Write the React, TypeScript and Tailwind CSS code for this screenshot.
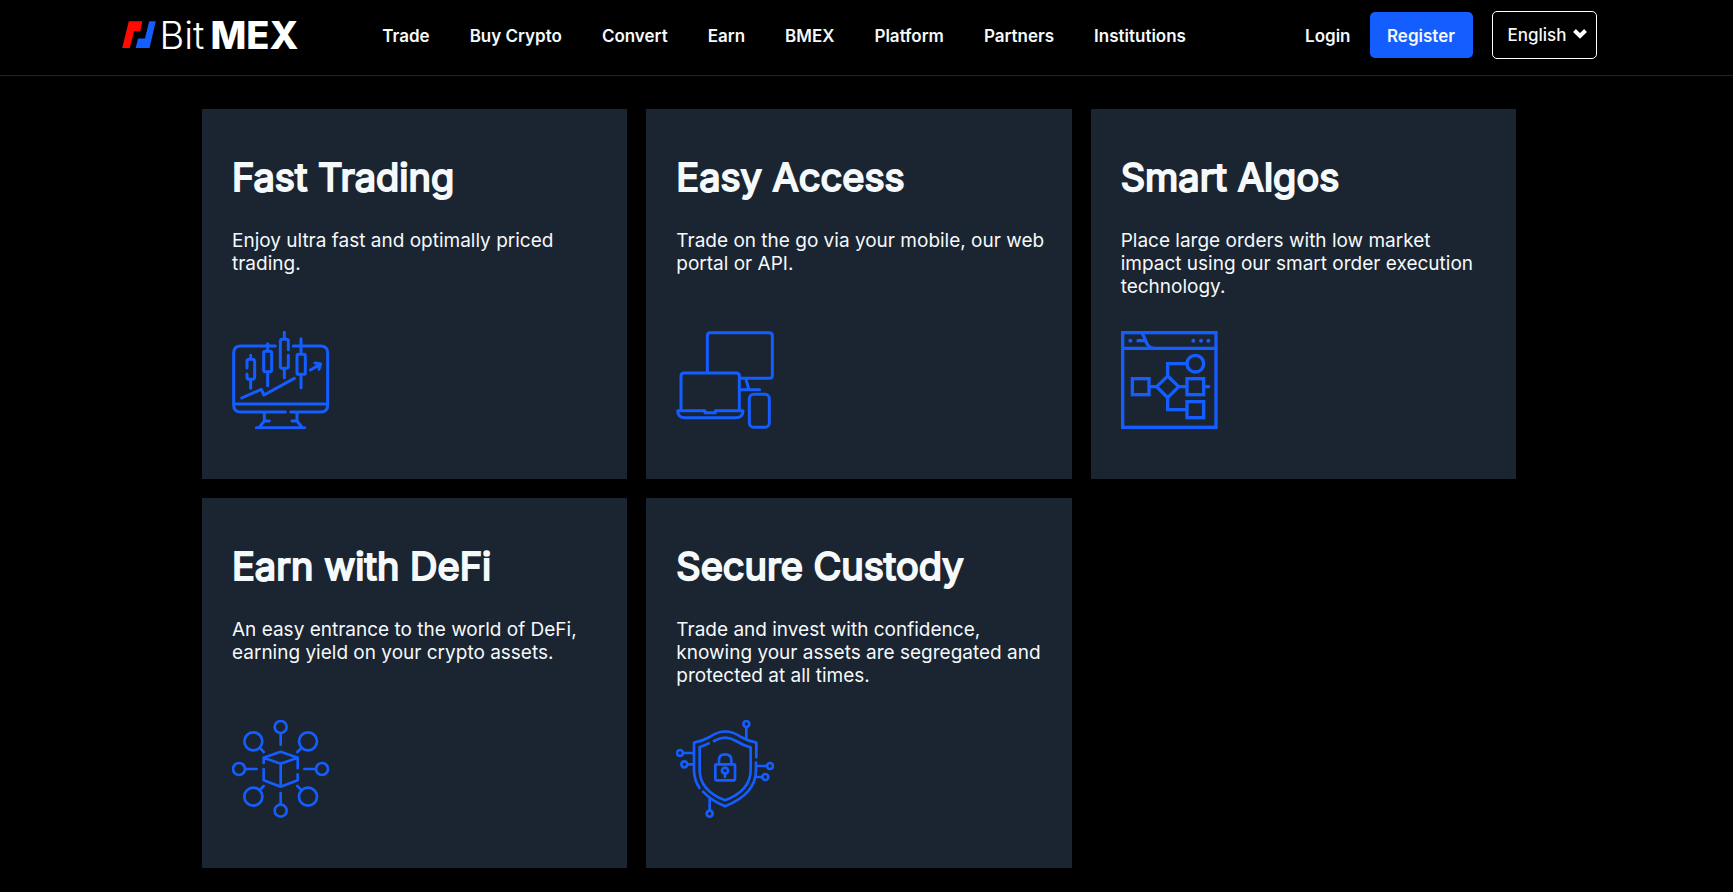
import React from 'react';

const navItems = ['Trade', 'Buy Crypto', 'Convert', 'Earn', 'BMEX', 'Platform', 'Partners', 'Institutions'];

const iconProps = {
  className: 'w-[98px] h-[98px] text-[#145dff]',
  fill: 'none',
  stroke: 'currentColor',
  strokeWidth: 9,
  strokeLinecap: 'round' as const,
  strokeLinejoin: 'round' as const,
  'aria-hidden': true
};

function TradingIcon() {
  return (
    <svg viewBox="36 33 294 294" {...iconProps}>
      {/* Monitor */}
      <path d="M166 78H62Q41 78 41 99V255Q41 276 62 276H196" />
      <path d="M220 78H302Q323 78 323 99V255Q323 276 302 276H212" />
      <path d="M41 252H323" strokeLinecap="butt" />
      <path d="M133 278V303H148M133 303L118 322M231 278V303H216M231 303L246 322M109 323H254" />
      {/* Candles */}
      <path d="M92 106V117M81 144V124Q81 118 87 118H98Q104 118 104 124V172Q104 178 98 178H87Q81 178 81 172V162M92 178V205" />
      <path d="M143 71V92M143 156V197" />
      <rect x="131" y="94" width="24" height="61" rx="5" />
      <path d="M193 37V57M205 89V64Q205 58 199 58H187Q181 58 181 64V139Q181 145 187 145H199Q205 145 205 139V106M193 146V173" />
      <path d="M243 56V101M243 164V203" />
      <rect x="231" y="103" width="25" height="60" rx="5" />
      <path d="M65 234L124 208L132 225L223 175" />
      <path d="M271 150L300 133M285 129L302 132L297 148" />
    </svg>
  );
}

function DevicesIcon() {
  return (
    <svg viewBox="33 33 294 294" {...iconProps}>
      <path d="M127 156V47Q127 38 136 38H313Q322 38 322 47V166Q322 175 313 175H228" />
      <path d="M243 178L251 207M228 209H284" />
      <path d="M48 268V168Q48 159 57 159H214Q223 159 223 168V268" />
      <path d="M38 272H120V278H151V272H234Q234 293 211 293H61Q38 293 38 272Z" />
      <rect x="253" y="223" width="60" height="99" rx="13" />
    </svg>
  );
}

function AlgosIcon() {
  return (
    <svg viewBox="33 33 294 294" {...iconProps} strokeWidth={10} strokeLinejoin="miter">
      <rect x="38" y="38" width="280" height="284" />
      <path d="M38 85H318" />
      <path d="M96 40Q102 48 106 60Q114 85 132 85M84 62H106" />
      <path d="M61 62h.1M250 62h.1M273 62h.1M295 62h.1" strokeWidth="12" />
      <circle cx="256" cy="131" r="25" />
      <path d="M230 131H173V169M173 233V269H229M118 200H140M207 200H230M284 200H296" />
      <path d="M173 168L206 200L173 233L140 200Z" />
      <rect x="67" y="176" width="50" height="48" />
      <rect x="231" y="176" width="50" height="48" />
      <rect x="231" y="245" width="50" height="48" />
    </svg>
  );
}

function DefiIcon() {
  return (
    <svg viewBox="36 30 294 294" {...iconProps} strokeWidth={8}>
      <circle cx="182" cy="51" r="18" />
      <circle cx="182" cy="302" r="18" />
      <circle cx="57" cy="177" r="18" />
      <circle cx="306" cy="177" r="18" />
      <circle cx="100" cy="94" r="27" />
      <circle cx="264" cy="94" r="27" />
      <circle cx="100" cy="260" r="27" />
      <circle cx="264" cy="260" r="27" />
      <path d="M182 71V104M182 249V281M77 177H110M253 177H286" />
      <path d="M119 113L131 126M245 113L232 126M119 241L131 228M245 241L232 228" />
      {/* Cube */}
      <path d="M131 159V143L182 125L233 143L182 161L131 143M182 161V230M233 143V175M233 193V211L182 230L131 211V177" />
    </svg>
  );
}

function CustodyIcon() {
  return (
    <svg viewBox="33 30 294 294" {...iconProps} strokeWidth={8}>
      <path d="M103 234Q87 208 87 180V98Q111 94 134 81Q181 48 228 81Q251 94 274 98V142" />
      <path d="M273 158V180Q273 252 180 289Q139 272 114 245" />
      <path d="M131 100Q117 107 104 111V180Q104 242 180 271Q257 242 257 180V112Q236 107 213 93Q181 73 147 93" />
      <rect x="151" y="163" width="59" height="48" rx="3" />
      <path d="M162 162V150Q162 133 180 133Q199 133 199 150V162M180 191V201" />
      <circle cx="180" cy="182" r="9" />
      <circle cx="244" cy="42" r="9" />
      <circle cx="45" cy="129" r="9" />
      <circle cx="58" cy="163" r="9" />
      <circle cx="315" cy="168" r="9" />
      <circle cx="301" cy="201" r="9" />
      <circle cx="134" cy="311" r="9" />
      <path d="M244 54V85M57 129H85M70 163H86M276 168H303M273 201H289M134 266V299" />
    </svg>
  );
}

const features = [
  {
    title: 'Fast Trading',
    text: 'Enjoy ultra fast and optimally priced trading.',
    icon: TradingIcon
  },
  {
    title: 'Easy Access',
    text: 'Trade on the go via your mobile, our web portal or API.',
    icon: DevicesIcon
  },
  {
    title: 'Smart Algos',
    text: 'Place large orders with low market impact using our smart order execution technology.',
    icon: AlgosIcon
  },
  {
    title: 'Earn with DeFi',
    text: 'An easy entrance to the world of DeFi, earning yield on your crypto assets.',
    icon: DefiIcon
  },
  {
    title: 'Secure Custody',
    text: 'Trade and invest with confidence, knowing your assets are segregated and protected at all times.',
    icon: CustodyIcon
  }
];

function Logo() {
  return (
    <a href="#" className="flex items-center gap-1 text-white">
      <svg viewBox="36 62 102 85" className="w-[34px] h-7" aria-hidden="true">
        <path d="M56 63H97L91 93H72L59 144H36Z" fill="#ff0b00" />
        <path d="M118 63H138L119 144H77L84 115H105Z" fill="#145dff" />
      </svg>
      <span className="flex gap-1.5 text-[38px] leading-7 font-light">
        <span>Bit</span>
        <span className="font-extrabold">MEX</span>
      </span>
    </a>
  );
}

function Header() {
  return (
    <header className="h-[76px] border-b border-[#1b2431] pr-[15px]">
      <div className="flex items-center max-w-[1475px] h-[70px] mx-auto">
        <Logo />
        <nav className="flex gap-10 ml-[84px] pt-1 text-[17px] font-semibold">
          {navItems.map((item) => (
            <a key={item} href="#" className="whitespace-nowrap">
              {item}
            </a>
          ))}
        </nav>
        <div className="flex items-center ml-auto text-[17px] font-semibold">
          <a href="#" className="pt-1">Login</a>
          <button type="button" className="w-[103px] h-[46px] ml-[19px] pt-1 rounded-[5px] bg-[#145dff]">
            Register
          </button>
          <div className="relative ml-[19px]">
            <select
              aria-label="Language"
              defaultValue="English"
              className="appearance-none w-[105px] h-12 pl-[15px] pt-0.5 rounded-[5px] border border-white bg-black text-[17px] font-medium"
            >
              <option>English</option>
            </select>
            <svg
              viewBox="0 0 14 10"
              className="absolute right-2.5 top-[18px] w-3.5 h-2.5 pointer-events-none"
              fill="none"
              stroke="white"
              strokeWidth="4"
              aria-hidden="true"
            >
              <path d="M1.500 1.500L7 7L12.500 1.500" />
            </svg>
          </div>
        </div>
      </div>
    </header>
  );
}

export default function App() {
  return (
    <div className="min-h-screen bg-black text-[#f5f9fa] font-['Inter',sans-serif]">
      <Header />
      <main className="pt-[33px] pb-4 pr-[15px]">
        <div className="grid grid-cols-3 gap-[19px] max-w-[1314px] mx-auto">
          {features.map(({ title, text, icon: Icon }) => (
            <section key={title} className="flex flex-col h-[370px] pl-[30px] pr-6 pt-11 bg-[#1b2431]">
              <h2 className="text-[38px] leading-12 font-normal [-webkit-text-stroke:2px]">{title}</h2>
              <p className="h-[69px] mt-7 mb-[33px] text-[19px] leading-[23px]">{text}</p>
              <Icon />
            </section>
          ))}
        </div>
      </main>
    </div>
  );
}
